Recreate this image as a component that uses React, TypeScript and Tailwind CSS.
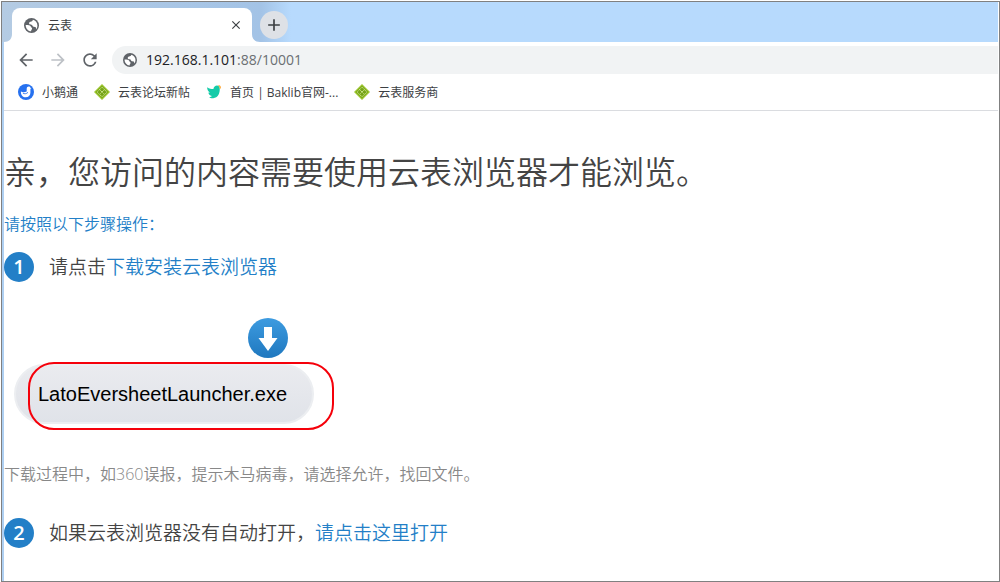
import type { ReactNode } from "react";
import { MdArrowBack, MdArrowForward, MdRefresh, MdAdd, MdClose } from "react-icons/md";

function GlobeIcon({ size }: { size: number }) {
  return (
    <svg width={size} height={size} viewBox="0 0 16 16" aria-hidden="true" className="shrink-0">
      <circle cx="8" cy="8" r="8" fill="#5f6368" />
      <path
        d="M9.500 1.900c-.2 1.500-1.300 1.800-2.600 2.100-1.200.3-1.700 1.200-1.400 2.200.3 1 1.500.8 2.400 1 1.200.3 1.100 1.700 2.200 2.100.9.300 1.900-.1 2.400.6.400.7.200 1.400.6 2 .8-1 1.200-2.400 1.200-3.900 0-2.900-2-5.400-4.800-6.100z"
        fill="#fff"
      />
      <path
        d="M1.800 7.400c1.300 0 3.200.1 4.400.6 1.100.5 1 1.700 1.800 2.200.7.500.9 1.300.3 2-.6.600-.8 1.100-.7 2-3.300-.2-5.900-3.300-5.800-6.800z"
        fill="#fff"
      />
    </svg>
  );
}

function GooseIcon() {
  return (
    <svg width="16" height="16" viewBox="0 0 16 16" aria-hidden="true">
      <circle cx="8" cy="8" r="8" fill="#2671ef" />
      <path
        d="M2.900 7.500c1.600.8 3.800.9 5.800-.1V4.700c0-1.300.9-2.100 2-2.100.9 0 1.400.5 1.700 1.100l1 .6-1 .5v4c0 2.600-1.900 4.500-4.700 4.500-2.900 0-4.900-2.200-4.800-5.800z"
        fill="#fff"
      />
      <path d="M5.200 9.300c1.500.8 3.200.6 4.500-.7" fill="none" stroke="#2671ef" strokeWidth=".9" strokeLinecap="round" />
    </svg>
  );
}

function DiamondIcon() {
  return (
    <svg width="16" height="16" viewBox="0 0 16 16" aria-hidden="true">
      <path d="M8 0l8 8-8 8-8-8z" fill="#9cc530" />
      <path d="M8 1.800L14.200 8 8 14.200 1.800 8z" fill="#74a318" />
      <path
        d="M8 3.200L12.800 8 8 12.800 3.200 8zM5.600 5.600l4.800 4.800M10.400 5.600l-4.800 4.800"
        fill="none"
        stroke="#d9ec9a"
        strokeWidth=".9"
        strokeDasharray="1.500 .6"
      />
    </svg>
  );
}

function BirdIcon() {
  return (
    <svg width="16" height="16" viewBox="0 0 16 16" aria-hidden="true">
      <path
        d="M1.200 3.200C3.300 4.900 5.300 5 7.400 5c.4-2.100 1.800-3.400 3.600-3.400 1.500 0 2.500 1 2.700 2.500.4 5.200-1.700 9.800-6.500 10.200-2.100.1-3.500-.6-4-1.400 1.200 0 2.200-.3 2.700-1-2.200-.4-3.300-1.800-3.500-3.400l1.500.2C2.100 7.300 1 5.300 1.200 3.200z"
        fill="#14cba8"
      />
      <path d="M12 1c1.600-.2 2.900.8 3 2.300 0 .8-.4 1.500-1.100 1.900-.1-1.600-.7-3-1.900-4.200z" fill="#ffab3d" />
    </svg>
  );
}

interface BookmarkProps {
  icon: ReactNode;
  label: string;
}

function Bookmark({ icon, label }: BookmarkProps) {
  return (
    <a href="#" className="flex items-center gap-2 whitespace-nowrap text-xs text-[#3c4043]">
      {icon}
      <span className="pt-0.5">{label}</span>
    </a>
  );
}

function Step({ index, children }: { index: number; children: ReactNode }) {
  return (
    <div className="flex items-center gap-[15px]">
      <span className="flex size-[30px] shrink-0 items-center justify-center rounded-full bg-[#237fc7] text-xl font-semibold text-white">
        {index}
      </span>
      <p className="text-[19px] leading-[30px]">{children}</p>
    </div>
  );
}

function TabStrip() {
  return (
    <div className="flex h-10 items-end bg-linear-to-r from-[#b4cbe3] from-0% via-[#a3c3e6] via-26% to-[#b7dafd] to-29%">
      {/* Flared corners on both sides of the active tab */}
      <svg width="10" height="8" viewBox="0 0 10 8" aria-hidden="true" className="shrink-0">
        <path d="M2 8h8V0c0 5-3 8-8 8z" fill="#fff" />
      </svg>
      <div className="flex h-[34px] w-60 items-center gap-[9px] rounded-t-lg bg-white pr-2 pl-3">
        <GlobeIcon size={15} />
        <span className="flex-1 pt-0.5 text-xs text-[#3c4043]">云表</span>
        <button aria-label="关闭标签页" className="flex size-4 items-center justify-center text-[#3c4043]">
          <MdClose size={14} />
        </button>
      </div>
      <svg width="8" height="8" viewBox="0 0 8 8" aria-hidden="true" className="shrink-0">
        <path d="M0 0v8h8C3 8 0 5 0 0z" fill="#fff" />
      </svg>
      <button
        aria-label="新标签页"
        className="mb-[3px] flex size-7 items-center justify-center rounded-full bg-[#dee1e6] text-[#3c4043]"
      >
        <MdAdd size={20} />
      </button>
    </div>
  );
}

function Toolbar() {
  return (
    <div className="flex items-center gap-3 bg-white pt-1 pl-3">
      <button aria-label="后退" className="text-[#5f6368]">
        <MdArrowBack size={20} />
      </button>
      <button aria-label="前进" className="text-[#bdc1c6]">
        <MdArrowForward size={20} />
      </button>
      <button aria-label="重新加载" className="text-[#5f6368]">
        <MdRefresh size={20} />
      </button>
      <div className="flex h-7 flex-1 items-center gap-[9px] rounded-l-full bg-[#f1f3f4] pl-[11px]">
        <GlobeIcon size={14} />
        <span className="text-sm text-[#6b6f73]">
          <span className="text-[#202124]">192.168.1.101</span>:88/10001
        </span>
      </div>
    </div>
  );
}

export default function App() {
  return (
    <div className="flex min-h-screen bg-white pt-px pl-px font-['Open_Sans','Noto_Sans_CJK_SC',sans-serif]">
      <div className="flex flex-1 flex-col border border-[#808080] pr-px">
        <TabStrip />
        <div className="flex-1 border-l-2 border-[#afd0f2]">
          <Toolbar />
          <nav className="flex h-[37px] items-center gap-4 border-b border-[#dadce0] pl-[14px]">
            <Bookmark icon={<GooseIcon />} label="小鹅通" />
            <Bookmark icon={<DiamondIcon />} label="云表论坛新帖" />
            <Bookmark icon={<BirdIcon />} label="首页 | Baklib官网-..." />
            <Bookmark icon={<DiamondIcon />} label="云表服务商" />
          </nav>

          <main className="pt-[37px] font-[350] text-[#444]">
            <h1 className="text-[32px] leading-[48px]">亲，您访问的内容需要使用云表浏览器才能浏览。</h1>
            <p className="my-4 text-base text-[#237fc7]">请按照以下步骤操作：</p>
            <Step index={1}>
              请点击
              <a href="#" className="text-[#237fc7]">
                下载安装云表浏览器
              </a>
            </Step>

            <div className="relative mt-9 w-fit pl-[10px]">
              <svg width="40" height="40" viewBox="0 0 40 40" aria-hidden="true" className="ml-[234px]">
                <defs>
                  <linearGradient id="download" x1="0" y1="0" x2="0" y2="1">
                    <stop offset="0" stopColor="#3d9be0" />
                    <stop offset="1" stopColor="#1f78bf" />
                  </linearGradient>
                </defs>
                <circle cx="20" cy="20" r="20" fill="url(#download)" />
                <path d="M16 9h8v11h5.500L20 33l-9.500-13H16z" fill="#fff" />
              </svg>
              <button className="mt-[6px] flex h-[60px] w-[300px] items-center rounded-full border-2 border-[#eceef1] bg-linear-to-b from-[#eaebef] to-[#e0e3e9] pl-[22px] font-['Liberation_Sans',Arial,sans-serif] text-xl font-normal text-black">
                LatoEversheetLauncher.exe
              </button>
              <div className="pointer-events-none absolute top-11 left-6 h-17 w-[306px] rounded-[26px] border-2 border-[#f5000a]" />
            </div>

            <p className="mt-[38px] mb-8 text-base text-[#888]">
              下载过程中，如360误报，提示木马病毒，请选择允许，找回文件。
            </p>
            <Step index={2}>
              如果云表浏览器没有自动打开，
              <a href="#" className="text-[#237fc7]">
                请点击这里打开
              </a>
            </Step>
          </main>
        </div>
      </div>
    </div>
  );
}
